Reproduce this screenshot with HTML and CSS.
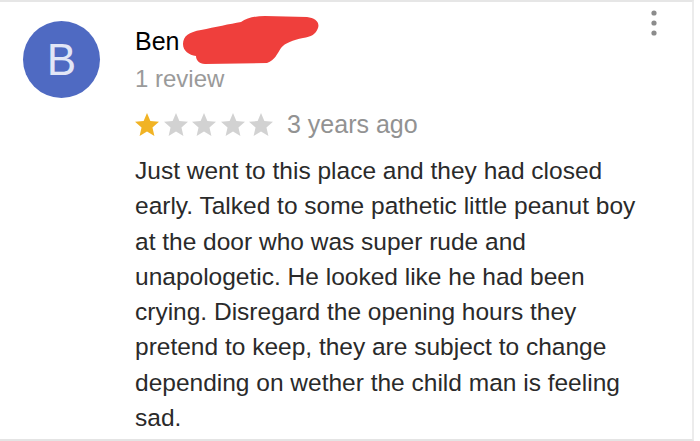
FILE: index.html
```html
<!DOCTYPE html>
<html>
<head>
<meta charset="utf-8">
<title>Review</title>
<link rel="stylesheet" href="styles.css">
</head>
<body>
<div class="review">
    <div class="avatar">B</div>
    <div class="content">
        <div class="name">Ben
            <svg class="scribble" width="150" height="60" viewBox="0 0 150 60"><path d="M8,34 C8,26 14,22 26,20 C40,17 55,14 66,12 C72,8 80,6 90,6 L132,7 C140,8 145,12 143,18 C141,24 136,27 128,28 C118,30 110,33 106,38 C102,44 100,50 92,53 L30,54 C24,54 21,50 21,46 C14,45 8,41 8,34 Z" fill="#ef3f3c"/></svg>
        </div>
        <div class="count">1 review</div>
        <div class="rating">
            <div class="stars">
                <svg class="star on" viewBox="2 2 20 19"><path d="M12 17.27L18.18 21l-1.64-7.03L22 9.24l-7.19-.61L12 2 9.19 8.63 2 9.24l5.46 4.73L5.82 21z"/></svg>
                <svg class="star" viewBox="2 2 20 19"><path d="M12 17.27L18.18 21l-1.64-7.03L22 9.24l-7.19-.61L12 2 9.19 8.63 2 9.24l5.46 4.73L5.82 21z"/></svg>
                <svg class="star" viewBox="2 2 20 19"><path d="M12 17.27L18.18 21l-1.64-7.03L22 9.24l-7.19-.61L12 2 9.19 8.63 2 9.24l5.46 4.73L5.82 21z"/></svg>
                <svg class="star" viewBox="2 2 20 19"><path d="M12 17.27L18.18 21l-1.64-7.03L22 9.24l-7.19-.61L12 2 9.19 8.63 2 9.24l5.46 4.73L5.82 21z"/></svg>
                <svg class="star" viewBox="2 2 20 19"><path d="M12 17.27L18.18 21l-1.64-7.03L22 9.24l-7.19-.61L12 2 9.19 8.63 2 9.24l5.46 4.73L5.82 21z"/></svg>
            </div>
            <span class="date">3 years ago</span>
        </div>
        <p class="text">Just went to this place and they had closed early. Talked to some pathetic little peanut boy at the door who was super rude and unapologetic. He looked like he had been crying. Disregard the opening hours they pretend to keep, they are subject to change depending on wether the child man is feeling sad.</p>
    </div>
    <div class="menu">
        <svg width="8" height="28" viewBox="0 0 8 28"><circle cx="4" cy="4" r="2.6" fill="#8c8c8c"/><circle cx="4" cy="14" r="2.6" fill="#8c8c8c"/><circle cx="4" cy="24" r="2.6" fill="#8c8c8c"/></svg>
    </div>
</div>
</body>
</html>
```

FILE: styles.css
```css
body {
    margin: 0;
    background: #fff;
    font-family: 'Liberation Sans', Arial, sans-serif;
}
.review {
    display: flex;
    width: 694px;
    height: 441px;
    border-top: 2px solid #e6e6e6;
    border-right: 2px solid #ececec;
    border-bottom: 2px solid #e4e4e4;
    box-sizing: border-box;
    position: relative;
}
.avatar {
    flex: none;
    width: 77px;
    height: 77px;
    margin: 19px 0 0 23px;
    border-radius: 50%;
    background: #4f6ac2;
    color: #e2e6f6;
    font-size: 44px;
    line-height: 77px;
    text-align: center;
}
.content {
    flex: 1;
    padding-left: 35px;
}
.name {
    position: relative;
    margin-top: 24px;
    font-size: 25px;
    line-height: 30px;
    color: #000;
}
.scribble {
    position: absolute;
    left: 40px;
    top: -16px;
}
.count {
    margin-top: 8px;
    font-size: 24px;
    line-height: 30px;
    color: #9a9a9a;
}
.rating {
    margin-top: 15px;
    display: flex;
    align-items: center;
    height: 30px;
}
.stars {
    display: flex;
    gap: 4.5px;
}
.star {
    display: block;
    width: 24px;
    height: 23px;
    fill: #d2d2d2;
}
.star.on {
    fill: #f1b324;
}
.date {
    margin-left: 14px;
    font-size: 25px;
    line-height: 30px;
    color: #929292;
}
.text {
    margin: 14px 0 0;
    width: 512px;
    font-size: 24.5px;
    line-height: 35.3px;
    color: #2a2a2a;
}
.menu {
    position: absolute;
    top: 7px;
    right: 34px;
}
```
